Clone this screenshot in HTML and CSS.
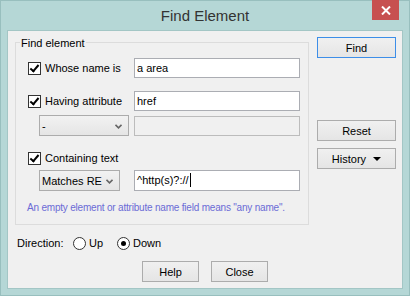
FILE: index.html
```html
<!DOCTYPE html>
<html lang="en">
<head>
  <meta charset="UTF-8" />
  <title>Find Element</title>
  <link rel="stylesheet" href="styles.css">
</head>
<body>

  <div class="window">
    <div class="titlebar">
      Find Element
      <span class="close">
        <svg width="10" height="9" viewBox="0 0 10 9">
          <path d="M1 0.5 L9 8.5 M9 0.5 L1 8.5" stroke="#fff" stroke-width="2" fill="none"/>
        </svg>
      </span>
    </div>

    <div class="client">
      <div class="main">
        <div class="group">
          <span class="legend">Find element</span>

          <div class="row r1">
            <label class="check"><span class="box on"></span>Whose name is</label>
            <div class="field">a area</div>
          </div>

          <div class="row r2">
            <label class="check"><span class="box on"></span>Having attribute</label>
            <div class="field">href</div>
          </div>

          <div class="row r3">
            <div class="combo wide">-
              <svg class="chev" width="7" height="5" viewBox="0 0 7 5"><path d="M0.5 0.8 L3.5 3.8 L6.5 0.8" stroke="#666" stroke-width="1.6" fill="none"/></svg>
            </div>
            <div class="field disabled"></div>
          </div>

          <div class="row r4">
            <label class="check"><span class="box on"></span>Containing text</label>
          </div>

          <div class="row r5">
            <div class="combo">Matches RE
              <svg class="chev" width="7" height="5" viewBox="0 0 7 5"><path d="M0.5 0.8 L3.5 3.8 L6.5 0.8" stroke="#666" stroke-width="1.6" fill="none"/></svg>
            </div>
            <div class="field">^http(s)?://<span class="caret"></span></div>
          </div>

          <p class="hint">An empty element or attribute name field means "any name".</p>
        </div>

        <div class="side">
          <button class="btn default">Find</button>
          <button class="btn reset">Reset</button>
          <button class="btn history">History <span class="tri"></span></button>
        </div>
      </div>

      <div class="direction">
        <span class="dir-label">Direction:</span>
        <label class="opt up"><span class="radio"></span>Up</label>
        <label class="opt"><span class="radio on"></span>Down</label>
      </div>

      <div class="footer">
        <button class="btn">Help</button>
        <button class="btn">Close</button>
      </div>
    </div>
  </div>

</body>
</html>
```

FILE: styles.css
```css
* { box-sizing: border-box; margin: 0; padding: 0; }

body {
  font-family: 'Liberation Sans', Arial, sans-serif;
  font-size: 11px;
  color: #000;
  background: #b5d7d6;
}

.window {
  width: 410px;
  height: 296px;
  background: #b5d7d6;
  border: 1px solid #98bfbe;
  padding: 0 6px 6px;
}

.titlebar {
  position: relative;
  height: 29px;
  margin: 0 -6px;
  text-align: center;
  font-size: 15px;
  line-height: 29px;
  color: #333;
}

.close {
  position: absolute;
  top: -1px;
  right: 10px;
  width: 27px;
  height: 20px;
  background: #c75050;
  display: flex;
  align-items: center;
  justify-content: center;
}

.client {
  height: 259px;
  background: #f0f0f0;
  border: 1px solid #a3c6c5;
}

.main {
  display: flex;
  align-items: flex-start;
  padding-left: 7px;
}

.group {
  position: relative;
  width: 294px;
  height: 183px;
  margin-top: 11px;
  border: 1px solid #dcdcdc;
  padding: 0 8px 0 12px;
}

.legend {
  position: absolute;
  top: -7px;
  left: 4px;
  padding: 0 1px;
  line-height: 14px;
  background: #f0f0f0;
}

.row {
  display: grid;
  grid-template-columns: 106px 166px;
  align-items: center;
  height: 20px;
}

.r1 { margin-top: 15px; }
.r2 { margin-top: 13px; }
.r3 { margin-top: 4px; }
.r4 { margin-top: 13px; }
.r5 { margin-top: 2px; height: 21px; }

.check {
  display: flex;
  align-items: center;
  gap: 4px;
}

.box {
  width: 13px;
  height: 13px;
  border: 1px solid #333;
  background: #fff;
  position: relative;
}

.box.on::after {
  content: '';
  position: absolute;
  left: 3px;
  top: 0px;
  width: 3px;
  height: 7px;
  border: solid #000;
  border-width: 0 2px 2px 0;
  transform: rotate(40deg);
}

.field {
  width: 166px;
  height: 20px;
  border: 1px solid #abadb3;
  background: #fff;
  padding: 0 2px;
  line-height: 18px;
  white-space: nowrap;
}

.r5 .field { height: 21px; line-height: 19px; }

.field.disabled {
  background: #f0f0f0;
  border-color: #bcbcbc;
}

.caret {
  display: inline-block;
  width: 1px;
  height: 14px;
  margin-left: 1px;
  background: #000;
  vertical-align: -3px;
}

.combo {
  display: flex;
  align-items: center;
  justify-content: space-between;
  margin-left: 11px;
  width: 81px;
  height: 21px;
  padding: 0 6px 0 2px;
  border: 1px solid #acacac;
  background: linear-gradient(#f2f2f2, #e5e5e5);
}

.combo.wide { width: 90px; }

.chev { margin-top: 2px; }

.hint {
  margin-top: 10px;
  margin-left: -1px;
  line-height: 14px;
  font-size: 10px;
  letter-spacing: -0.2px;
  color: #6b6bd6;
}

.side {
  display: flex;
  flex-direction: column;
  width: 79px;
  margin-left: 8px;
  margin-top: 6px;
}

.btn {
  height: 21px;
  border: 1px solid #acacac;
  background: linear-gradient(#f0f0f0, #e5e5e5);
  font: inherit;
  color: #000;
}

.btn.default { border-color: #3d8ee8; }
.btn.reset { margin-top: 62px; }
.btn.history { margin-top: 7px; }

.tri {
  display: inline-block;
  width: 0;
  height: 0;
  border-left: 4px solid transparent;
  border-right: 4px solid transparent;
  border-top: 4px solid #000;
  margin-left: 4px;
  vertical-align: 2px;
}

.direction {
  display: flex;
  align-items: center;
  height: 14px;
  margin-top: 11px;
  padding-left: 9px;
}

.dir-label { width: 56px; }

.opt {
  display: flex;
  align-items: center;
  gap: 3px;
}

.opt.up { width: 44px; }

.radio {
  width: 13px;
  height: 13px;
  border: 1px solid #333;
  border-radius: 50%;
  background: #fff;
  display: flex;
  align-items: center;
  justify-content: center;
}

.radio.on::after {
  content: '';
  width: 5px;
  height: 5px;
  border-radius: 50%;
  background: #000;
}

.footer {
  display: flex;
  justify-content: center;
  gap: 12px;
  margin-top: 11px;
}

.footer .btn { width: 57px; }
```
